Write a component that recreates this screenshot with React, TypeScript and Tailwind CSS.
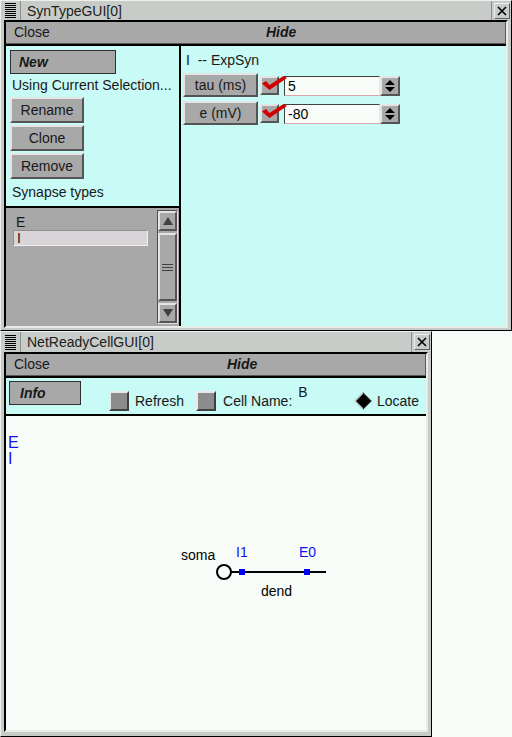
import React from "react";

const raised =
  "border-2 border-t-[#e4e4e4] border-l-[#e4e4e4] border-r-[#545454] border-b-[#545454] bg-[#a8a8a8]";

function TitleBar({ title, h }: { title: string; h: string }) {
  return (
    <div className={`flex items-stretch ${h}`}>
      <div className="w-[20px] flex flex-col justify-center gap-[1px] px-[4px] border-r border-[#8c908c]">
        {[0, 1, 2, 3, 4, 5, 6, 7].map((i) => (
          <div key={i} className="h-[1px] bg-black" />
        ))}
      </div>
      <div className="flex-1 pl-[6px] text-[14px] leading-[20px] text-[#202020]">{title}</div>
      <div className="w-[20px] flex items-center justify-center border-l border-[#8c908c]">
        <div className="w-[16px] h-[16px] flex items-center justify-center border border-t-[#f0f0f0] border-l-[#f0f0f0] border-r-[#606060] border-b-[#606060]">
          <svg width="10" height="10" viewBox="0 0 10 10">
            <path d="M1 1 L9 9 M9 1 L1 9" stroke="#000" strokeWidth="1.6" />
          </svg>
        </div>
      </div>
    </div>
  );
}

function MenuBar({ closeW }: { closeW: string }) {
  return (
    <div className="h-[22px] flex items-center bg-[#a8a8a8] border-r border-b border-r-[#585858] border-b-[#585858] text-[14px] text-[#181818]">
      <div className={`${closeW} pl-[8px]`}>Close</div>
      <div className="font-bold italic">Hide</div>
    </div>
  );
}

function Check() {
  return (
    <div className={`relative z-10 w-[19px] h-[19px] ${raised}`}>
      <svg className="absolute left-[0px] top-[-2px] overflow-visible" width="26" height="15" viewBox="0 0 26 15">
        <path d="M0 7.5 L4 5 L7.5 9 L21.5 0 L25 2 L7.5 14 Z" fill="#d00000" />
      </svg>
    </div>
  );
}

function Spinner() {
  return (
    <div className={`w-[20px] h-[20px] flex flex-col items-center justify-center gap-[2px] ${raised}`}>
      <svg width="10" height="12" viewBox="0 0 10 12">
        <path d="M5 0 L10 5 L0 5 Z M0 7 L10 7 L5 12 Z" fill="#000" />
      </svg>
    </div>
  );
}

function ParamRow({ label, value }: { label: string; value: string }) {
  return (
    <div className="flex items-center h-[24px]">
      <div className={`w-[75px] h-[24px] flex items-center justify-center text-[14px] text-[#181818] ${raised}`}>
        {label}
      </div>
      <div className="relative z-10 ml-[2px] mt-[1px]">
        <Check />
      </div>
      <div className="ml-[5px] w-[96px] h-[20px] mt-[1px] bg-[#f8fcf8] border border-t-[#404040] border-l-[#404040] border-r-[#e8e8e8] border-b-[#d8a8a8] pl-[3px] text-[14px] leading-[18px] text-black">
        {value}
      </div>
      <div className="mt-[1px]">
        <Spinner />
      </div>
    </div>
  );
}

function ScrollBar() {
  return (
    <div className="w-[21px] flex flex-col bg-[#a8a8a8] border border-t-[#505050] border-l-[#505050] border-r-[#e0e0e0] border-b-[#e0e0e0]">
      <div className={`h-[20px] flex items-center justify-center ${raised}`}>
        <svg width="10" height="8" viewBox="0 0 10 8">
          <path d="M5 0 L10 8 L0 8 Z" fill="#404040" />
        </svg>
      </div>
      <div className="flex-1 py-[2px] flex">
        <div className={`flex-1 flex flex-col items-stretch justify-center gap-[2px] px-[2px] ${raised}`}>
          <div className="h-[1px] bg-[#404040]" />
          <div className="h-[1px] bg-[#404040]" />
          <div className="h-[1px] bg-[#404040]" />
        </div>
      </div>
      <div className={`h-[20px] flex items-center justify-center ${raised}`}>
        <svg width="10" height="8" viewBox="0 0 10 8">
          <path d="M0 0 L10 0 L5 8 Z" fill="#404040" />
        </svg>
      </div>
    </div>
  );
}

function SynTypeWindow() {
  return (
    <div className="h-[331px] w-[512px] flex flex-col bg-[#c8ccc8] border border-t-[#eef0ee] border-l-[#eef0ee] border-r-black border-b-black">
      <TitleBar title="SynTypeGUI[0]" h="h-[19px]" />
      <div className="flex-1 flex flex-col px-[3px] pb-[2px]">
        <div className="flex-1 flex flex-col border-2 border-t-black border-l-black border-r-[#e8ece8] border-b-[#e8ece8]">
          <MenuBar closeW="w-[260px]" />
          <div className="h-[2px] bg-black" />
          <div className="flex-1 flex">
            {/* left column */}
            <div className="w-[173px] flex flex-col">
              <div className="h-[160px] bg-[#c8faf6] pt-[4px] pl-[4px] flex flex-col items-start text-[14px] text-[#181818]">
                <div className="w-[106px] h-[24px] flex items-center pl-[8px] bg-[#a8a8a8] border border-[#303030] font-bold italic">
                  New
                </div>
                <div className="h-[22px] leading-[22px] pl-[2px]">Using Current Selection...</div>
                <div className={`mt-[1px] w-[74px] h-[26px] flex items-center justify-center ${raised}`}>Rename</div>
                <div className={`mt-[2px] w-[74px] h-[26px] flex items-center justify-center ${raised}`}>Clone</div>
                <div className={`mt-[2px] w-[74px] h-[26px] flex items-center justify-center ${raised}`}>Remove</div>
                <div className="h-[26px] leading-[26px] pl-[2px]">Synapse types</div>
              </div>
              <div className="h-[2px] bg-black" />
              <div className="flex-1 flex bg-[#a8a8a8] pr-[1px] py-[2px]">
                <div className="flex-1 pl-[7px] pt-[4px] text-[14px] text-[#181818]">
                  <div className="h-[16px] leading-[16px] pl-[3px]">E</div>
                  <div className="w-[135px] h-[16px] leading-[14px] pl-[3px] bg-[#d8d4d8] border border-t-[#909090] border-l-[#909090] border-r-[#f0f0f0] border-b-[#f0f0f0]">
                    I
                  </div>
                </div>
                <ScrollBar />
              </div>
            </div>
            <div className="w-[2px] bg-black" />
            {/* right column */}
            <div className="flex-1 bg-[#c8faf6] pl-[2px] pt-[4px] flex flex-col gap-[4px]">
              <div className="h-[19px] leading-[20px] pl-[3px] text-[14px] text-[#181818] whitespace-pre">I  -- ExpSyn</div>
              <ParamRow label="tau (ms)" value="5" />
              <ParamRow label="e (mV)" value="-80" />
            </div>
          </div>
        </div>
      </div>
    </div>
  );
}

function SmallBox() {
  return (
    <div className="w-[20px] h-[20px] bg-[#8c8c8c] border-2 border-t-[#e8e8e8] border-l-[#e8e8e8] border-r-[#404040] border-b-[#404040]" />
  );
}

function NetReadyWindow() {
  return (
    <div className="h-[406px] w-[432px] flex flex-col bg-[#c8ccc8] border border-t-[#eef0ee] border-l-[#eef0ee] border-r-black border-b-black">
      <TitleBar title="NetReadyCellGUI[0]" h="h-[20px]" />
      <div className="flex-1 flex flex-col px-[3px] pb-[4px]">
        <div className="flex-1 flex flex-col border-2 border-t-black border-l-black border-r-[#e8ece8] border-b-[#e8ece8]">
          <MenuBar closeW="w-[221px]" />
          <div className="h-[2px] bg-black" />
          <div className="h-[36px] bg-[#c8faf6] flex items-start pt-[3px] pl-[3px] pr-[7px] text-[14px] text-[#181818]">
            <div className="w-[72px] h-[24px] flex items-center pl-[10px] bg-[#a8a8a8] border border-[#303030] font-bold italic">
              Info
            </div>
            <div className="ml-[28px] mt-[10px]">
              <SmallBox />
            </div>
            <div className="ml-[6px] mt-[10px] leading-[20px]">Refresh</div>
            <div className="ml-[12px] mt-[10px]">
              <SmallBox />
            </div>
            <div className="ml-[7px] mt-[10px] leading-[20px]">Cell Name:</div>
            <div className="ml-[6px] mt-[3px] leading-[16px]">B</div>
            <div className="ml-auto mt-[14px] w-[12px] h-[12px] rotate-45 bg-black border border-b-[#e0e0e0] border-l-[#e0e0e0] border-t-[#202020] border-r-[#202020]" />
            <div className="ml-[8px] mt-[10px] leading-[20px]">Locate</div>
          </div>
          <div className="h-[2px] bg-black" />
          <div className="flex-1 relative bg-[#f8fcf8]">
            <div className="pl-[2px] pt-[19px] text-[16px] leading-[16px] text-[#1010f0]">
              <div>E</div>
              <div>I</div>
            </div>
            <svg className="absolute left-0 top-0" width="330" height="200" viewBox="0 0 330 200">
              <circle cx="218" cy="156" r="7" fill="none" stroke="#000" strokeWidth="2" />
              <line x1="225" y1="156" x2="320" y2="156" stroke="#000" strokeWidth="2" />
              <rect x="233" y="153" width="6" height="6" fill="#0000ff" />
              <rect x="298" y="153" width="6" height="6" fill="#0000ff" />
            </svg>
            <span className="absolute left-[175px] top-[130px] text-[14px] leading-[18px] text-black">soma</span>
            <span className="absolute left-[230px] top-[127px] text-[14px] leading-[18px] text-[#1010f0]">I1</span>
            <span className="absolute left-[293px] top-[127px] text-[14px] leading-[18px] text-[#1010f0]">E0</span>
            <span className="absolute left-[255px] top-[166px] text-[14px] leading-[18px] text-black">dend</span>
          </div>
        </div>
      </div>
    </div>
  );
}

export default function App() {
  return (
    <div className="w-[512px] h-[737px] bg-[#f8fcf8] flex flex-col overflow-hidden font-['Liberation_Sans',Arial,sans-serif]">
      <SynTypeWindow />
      <NetReadyWindow />
    </div>
  );
}
